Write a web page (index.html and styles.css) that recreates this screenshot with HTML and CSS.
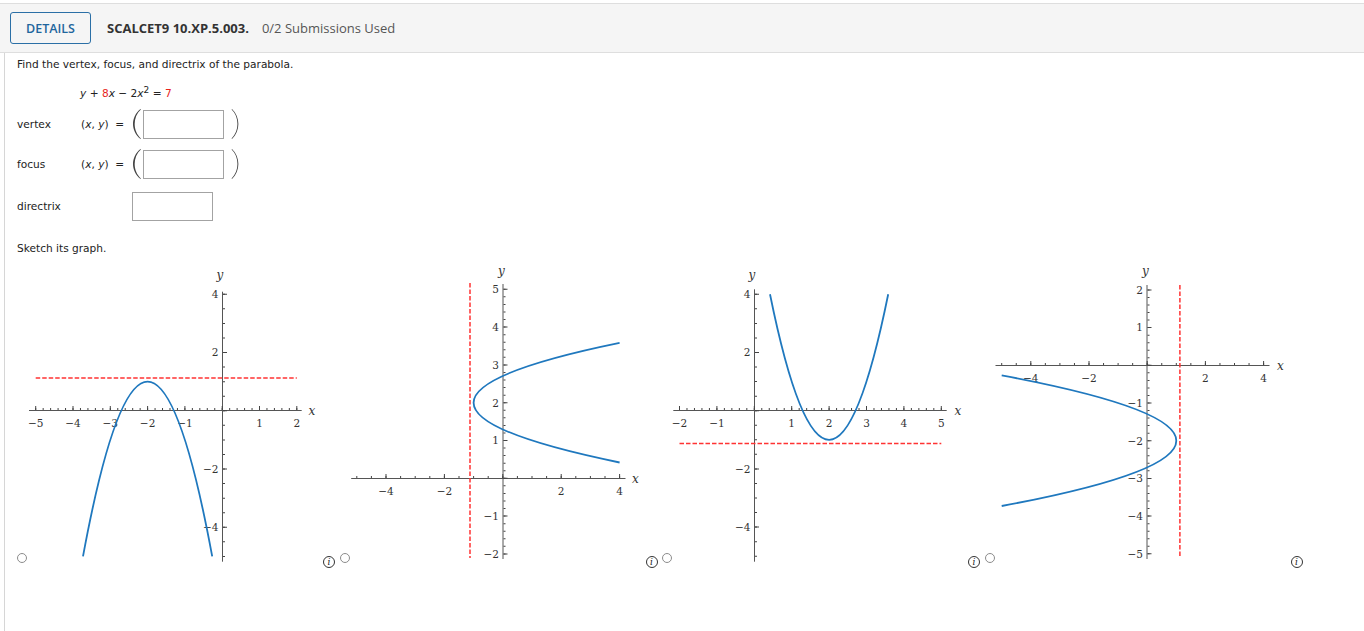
FILE: index.html
```html
<!DOCTYPE html>
<html>
<head>
<meta charset="utf-8">
<link rel="stylesheet" href="styles.css">
</head>
<body>
<div class="page">
  <div class="hdr">
    <div class="details">DETAILS</div>
    <span class="qid">SCALCET9 10.XP.5.003.</span>
    <span class="subs">0/2 Submissions Used</span>
  </div>
  <div class="content">
    <p class="prompt">Find the vertex, focus, and directrix of the parabola.</p>
    <p class="eq"><i>y</i> + <span class="red">8</span><i>x</i> &minus; 2<i>x</i><sup>2</sup> = <span class="red">7</span></p>

    <div class="answer r-vertex">
      <span>vertex</span>
      <span>(<i>x</i>, <i>y</i>) &nbsp;=</span>
      <span class="cell">
        <svg class="paren" width="11" height="32" viewBox="0 0 11 32"><path d="M8.5 1 C-1.5 9 -1.5 23 8.5 31 L8.9 30.4 C0.6 23 0.6 9 8.9 1.6 Z"/></svg>
        <span class="box"></span>
        <svg class="paren close" width="9" height="32" viewBox="0 0 9 32"><path d="M1 1 C9.5 9 9.5 23 1 31 L0.6 30.4 C8.4 23 8.4 9 0.6 1.6 Z"/></svg>
      </span>
    </div>
    <div class="answer r-focus">
      <span>focus</span>
      <span>(<i>x</i>, <i>y</i>) &nbsp;=</span>
      <span class="cell">
        <svg class="paren" width="11" height="32" viewBox="0 0 11 32"><path d="M8.5 1 C-1.5 9 -1.5 23 8.5 31 L8.9 30.4 C0.6 23 0.6 9 8.9 1.6 Z"/></svg>
        <span class="box"></span>
        <svg class="paren close" width="9" height="32" viewBox="0 0 9 32"><path d="M1 1 C9.5 9 9.5 23 1 31 L0.6 30.4 C8.4 23 8.4 9 0.6 1.6 Z"/></svg>
      </span>
    </div>
    <div class="answer r-dir">
      <span>directrix</span>
      <span></span>
      <span class="cell"><span class="box"></span></span>
    </div>

    <p class="sketch">Sketch its graph.</p>

    <div class="graphs">
      <div class="opt">
        <span class="radio"></span>
        <svg class="plot" width="295" height="300" viewBox="27 265 295 300">
          <g class="axes">
            <line x1="29" y1="410.5" x2="301.7" y2="410.5"/>
            <line x1="222.5" y1="291.7" x2="222.5" y2="561.7"/>
          </g>
          <g class="ticks">
            <line x1="35.2" y1="409" x2="297.5" y2="409" stroke-width="2" stroke-dasharray="1 6.46"/>
            <line x1="35.2" y1="408" x2="297.5" y2="408" stroke-width="4" stroke-dasharray="1 36.3"/>
            <line x1="224" y1="293.8" x2="224" y2="557" stroke-width="2" stroke-dasharray="1 13.56"/>
            <line x1="225" y1="293.8" x2="225" y2="557" stroke-width="4" stroke-dasharray="1 57.25"/>
          </g>
          <g class="lx">
            <text x="35.7" y="427">&minus;5</text>
            <text x="73" y="427">&minus;4</text>
            <text x="110.3" y="427">&minus;3</text>
            <text x="147.6" y="427">&minus;2</text>
            <text x="184.9" y="427">&minus;1</text>
            <text x="259.5" y="427">1</text>
            <text x="296.8" y="427">2</text>
          </g>
          <g class="ly">
            <text x="218.5" y="298.1">4</text>
            <text x="218.5" y="356.3">2</text>
            <text x="218.5" y="472.8">&minus;2</text>
            <text x="218.5" y="531.1">&minus;4</text>
          </g>
          <text class="var" x="312" y="415">x</text>
          <text class="var" x="220" y="279">y</text>
          <path class="curve" d="M83 556.4 Q147.6 206.9 212.2 556.4"/>
          <line class="dir" x1="35.7" y1="378" x2="296.8" y2="378"/>
        </svg>
        <span class="info">i</span>
      </div>

      <div class="opt">
        <span class="radio"></span>
        <svg class="plot" width="295" height="300" viewBox="349.5 265 295 300">
          <g class="axes">
            <line x1="350.7" y1="478.5" x2="625" y2="478.5"/>
            <line x1="502.5" y1="284" x2="502.5" y2="559"/>
          </g>
          <g class="ticks">
            <line x1="355.8" y1="477" x2="620" y2="477" stroke-width="2" stroke-dasharray="1 13.6"/>
            <line x1="385" y1="476" x2="620" y2="476" stroke-width="4" stroke-dasharray="1 57.4"/>
            <line x1="504" y1="288.8" x2="504" y2="555" stroke-width="2" stroke-dasharray="1 6.56"/>
            <line x1="505" y1="288.8" x2="505" y2="555" stroke-width="4" stroke-dasharray="1 36.8"/>
          </g>
          <g class="lx">
            <text x="385.5" y="494.5">&minus;4</text>
            <text x="443.9" y="494.5">&minus;2</text>
            <text x="560.7" y="494.5">2</text>
            <text x="619.1" y="494.5">4</text>
          </g>
          <g class="ly">
            <text x="498.5" y="293.1">5</text>
            <text x="498.5" y="330.9">4</text>
            <text x="498.5" y="368.7">3</text>
            <text x="498.5" y="406.5">2</text>
            <text x="498.5" y="444.3">1</text>
            <text x="498.5" y="519.9">&minus;1</text>
            <text x="498.5" y="557.7">&minus;2</text>
          </g>
          <text class="var" x="635" y="483">x</text>
          <text class="var" x="501" y="275">y</text>
          <path class="curve" d="M619.1 462.5 Q327.1 402.7 619.1 342.9"/>
          <line class="dir" x1="469.5" y1="283" x2="469.5" y2="558"/>
        </svg>
        <span class="info">i</span>
      </div>

      <div class="opt">
        <span class="radio"></span>
        <svg class="plot" width="295" height="300" viewBox="672 265 295 300">
          <g class="axes">
            <line x1="673.3" y1="410.5" x2="946.7" y2="410.5"/>
            <line x1="754.5" y1="289.3" x2="754.5" y2="561.7"/>
          </g>
          <g class="ticks">
            <line x1="679" y1="409" x2="942" y2="409" stroke-width="2" stroke-dasharray="1 6.48"/>
            <line x1="679" y1="408" x2="942" y2="408" stroke-width="4" stroke-dasharray="1 36.4"/>
            <line x1="756" y1="293.8" x2="756" y2="557" stroke-width="2" stroke-dasharray="1 13.55"/>
            <line x1="757" y1="293.8" x2="757" y2="557" stroke-width="4" stroke-dasharray="1 57.2"/>
          </g>
          <g class="lx">
            <text x="679.5" y="427">&minus;2</text>
            <text x="716.9" y="427">&minus;1</text>
            <text x="791.7" y="427">1</text>
            <text x="829.1" y="427">2</text>
            <text x="866.5" y="427">3</text>
            <text x="903.9" y="427">4</text>
            <text x="941.3" y="427">5</text>
          </g>
          <g class="ly">
            <text x="750.5" y="298.1">4</text>
            <text x="750.5" y="356.3">2</text>
            <text x="750.5" y="472.7">&minus;2</text>
            <text x="750.5" y="530.9">&minus;4</text>
          </g>
          <text class="var" x="958" y="415">x</text>
          <text class="var" x="752" y="279">y</text>
          <path class="curve" d="M770 294.3 Q829.1 585.3 888.2 294.3"/>
          <line class="dir" x1="679.5" y1="443.4" x2="941.3" y2="443.4"/>
        </svg>
        <span class="info">i</span>
      </div>

      <div class="opt">
        <span class="radio"></span>
        <svg class="plot" width="295" height="300" viewBox="994.5 265 295 300">
          <g class="axes">
            <line x1="995" y1="365.5" x2="1269" y2="365.5"/>
            <line x1="1146.5" y1="285" x2="1146.5" y2="559"/>
          </g>
          <g class="ticks">
            <line x1="1000.7" y1="364" x2="1264" y2="364" stroke-width="2" stroke-dasharray="1 13.55"/>
            <line x1="1029.8" y1="363" x2="1264" y2="363" stroke-width="4" stroke-dasharray="1 57.2"/>
            <line x1="1148" y1="289.4" x2="1148" y2="555" stroke-width="2" stroke-dasharray="1 6.54"/>
            <line x1="1149" y1="289.4" x2="1149" y2="555" stroke-width="4" stroke-dasharray="1 36.7"/>
          </g>
          <g class="lx">
            <text x="1030.3" y="381.5">&minus;4</text>
            <text x="1088.5" y="381.5">&minus;2</text>
            <text x="1204.9" y="381.5">2</text>
            <text x="1263.1" y="381.5">4</text>
          </g>
          <g class="ly">
            <text x="1142.5" y="293.7">2</text>
            <text x="1142.5" y="331.4">1</text>
            <text x="1142.5" y="406.8">&minus;1</text>
            <text x="1142.5" y="444.5">&minus;2</text>
            <text x="1142.5" y="482.2">&minus;3</text>
            <text x="1142.5" y="519.9">&minus;4</text>
            <text x="1142.5" y="557.6">&minus;5</text>
          </g>
          <text class="var" x="1280" y="370">x</text>
          <text class="var" x="1145" y="275">y</text>
          <path class="curve" d="M1001.2 375.4 Q1350.4 440.7 1001.2 506"/>
          <line class="dir" x1="1179.4" y1="285" x2="1179.4" y2="558"/>
        </svg>
        <span class="info">i</span>
      </div>
    </div>
  </div>
</div>
</body>
</html>
```

FILE: styles.css
```css
html, body {
  margin: 0;
  padding: 0;
  background: #fff;
}
body {
  font-family: "DejaVu Sans", Verdana, sans-serif;
  font-size: 10.6px;
  color: #222;
}
.page {
  padding-top: 3px;
}
.hdr {
  display: flex;
  align-items: center;
  height: 48px;
  padding: 0 10px;
  background: #f5f5f5;
  border-top: 1px solid #dedede;
  border-bottom: 1px solid #dedede;
  font-family: "Open Sans", sans-serif;
}
.details {
  box-sizing: border-box;
  width: 81px;
  height: 32px;
  border: 1px solid #2b6fa6;
  border-radius: 3px;
  color: #1f669d;
  font-weight: 600;
  font-size: 12.5px;
  display: flex;
  align-items: center;
  justify-content: center;
}
.qid {
  margin-left: 16px;
  font-weight: 700;
  font-size: 13px;
  color: #333;
}
.subs {
  margin-left: 13px;
  font-size: 13px;
  color: #555;
}
.content {
  box-sizing: border-box;
  height: calc(100vh - 53px);
  margin-left: 4px;
  border-left: 1px solid #d6d6d6;
  padding: 4px 0 0 12px;
}
p {
  margin: 0;
  line-height: 14px;
}
.eq {
  margin: 15px 0 0 63px;
}
.eq sup {
  font-size: 9px;
  line-height: 0;
  vertical-align: 4px;
}
.red {
  color: #e8231b;
}
.answer {
  display: grid;
  grid-template-columns: 64px 51px auto;
  align-items: center;
  height: 30px;
}
.r-vertex { margin-top: 8px; }
.r-focus { margin-top: 10px; }
.r-dir { margin-top: 13px; }
.cell {
  display: flex;
  align-items: center;
}
.box {
  box-sizing: border-box;
  width: 81px;
  height: 29px;
  border: 1px solid #a3a3a3;
  background: #fff;
}
.paren {
  display: block;
  fill: #444;
}
.paren.close {
  margin-left: 7px;
}
.sketch {
  margin-top: 20px;
}
.graphs {
  display: flex;
  margin-top: 10px;
}
.opt {
  flex: none;
  width: 322.5px;
  display: flex;
  align-items: flex-start;
}
.radio {
  flex: none;
  box-sizing: border-box;
  width: 10px;
  height: 10px;
  margin-top: 288px;
  border: 1px solid #8c8c8c;
  border-radius: 50%;
  background: #fff;
}
.plot {
  flex: none;
  display: block;
  overflow: hidden;
}
.info {
  flex: none;
  box-sizing: border-box;
  width: 12px;
  height: 12px;
  margin: 291px 0 0 1px;
  border: 1px solid #333;
  border-radius: 50%;
  font-family: "DejaVu Serif", serif;
  font-style: italic;
  font-size: 9px;
  line-height: 10px;
  text-align: center;
  color: #222;
}
.axes line {
  stroke: #555;
  stroke-width: 1;
}
.ticks line {
  stroke: #444;
}
.lx text, .ly text {
  font-family: "DejaVu Serif", serif;
  font-size: 10.5px;
  fill: #333;
}
.lx text {
  text-anchor: middle;
}
.ly text {
  text-anchor: end;
}
.var {
  font-family: "DejaVu Serif", serif;
  font-style: italic;
  font-size: 12px;
  fill: #333;
  text-anchor: middle;
}
.curve {
  fill: none;
  stroke: #1f78be;
  stroke-width: 1.8;
}
.dir {
  stroke: #f33;
  stroke-width: 1.5;
  stroke-dasharray: 4.5 2;
}
```
